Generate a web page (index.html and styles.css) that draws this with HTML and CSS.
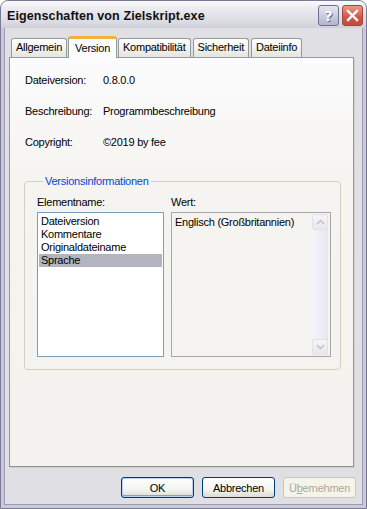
FILE: index.html
```html
<!DOCTYPE html>
<html>
<head>
    <link rel="stylesheet" href="styles.css">
    <title>Eigenschaften von Zielskript.exe</title>
</head>
<body>
<div class="window">
    <div class="titlebar">
        <span class="title">Eigenschaften von Zielskript.exe</span>
        <div class="caption_buttons">
            <div class="cap_btn help_btn">?</div>
            <div class="cap_btn close_btn">
                <svg width="13" height="13" viewBox="0 0 13 13">
                    <path d="M2 2 L11 11 M11 2 L2 11" stroke="#ffffff" stroke-width="2.4" stroke-linecap="square"/>
                </svg>
            </div>
        </div>
    </div>

    <div class="client">
        <div class="tabs">
            <div class="tab">Allgemein</div>
            <div class="tab selected">Version</div>
            <div class="tab">Kompatibilität</div>
            <div class="tab">Sicherheit</div>
            <div class="tab">Dateiinfo</div>
        </div>

        <div class="panel">
            <div class="row">
                <span class="label">Dateiversion:</span>
                <span class="value">0.8.0.0</span>
            </div>
            <div class="row">
                <span class="label">Beschreibung:</span>
                <span class="value">Programmbeschreibung</span>
            </div>
            <div class="row">
                <span class="label">Copyright:</span>
                <span class="value">©2019 by fee</span>
            </div>

            <fieldset class="groupbox">
                <legend>Versionsinformationen</legend>
                <div class="columns">
                    <div class="col">
                        <div class="col_label">Elementname:</div>
                        <div class="listbox">
                            <div class="item">Dateiversion</div>
                            <div class="item">Kommentare</div>
                            <div class="item">Originaldateiname</div>
                            <div class="item active">Sprache</div>
                        </div>
                    </div>
                    <div class="col">
                        <div class="col_label">Wert:</div>
                        <div class="valuebox">
                            <div class="valuetext">Englisch (Großbritannien)</div>
                            <div class="scrollbar">
                                <div class="sb_btn">
                                    <svg width="9" height="6" viewBox="0 0 9 6"><path d="M1 5 L4.5 1.5 L8 5" fill="none" stroke="#c3c3cc" stroke-width="1.6"/></svg>
                                </div>
                                <div class="sb_track"></div>
                                <div class="sb_btn">
                                    <svg width="9" height="6" viewBox="0 0 9 6"><path d="M1 1 L4.5 4.5 L8 1" fill="none" stroke="#c3c3cc" stroke-width="1.6"/></svg>
                                </div>
                            </div>
                        </div>
                    </div>
                </div>
            </fieldset>
        </div>

        <div class="buttons">
            <button class="default">OK</button>
            <button>Abbrechen</button>
            <button disabled>Ü<u>b</u>ernehmen</button>
        </div>
    </div>
</div>
</body>
</html>
```

FILE: styles.css
```css
body
{
    margin:0;
    font-family:"Liberation Sans", Arial, sans-serif;
    font-size:11px;
    letter-spacing:-0.25px;
    color:black;
    background-color:white;
}
.window
{
    box-sizing:border-box;
    width:367px;
    height:509px;
    border:1px solid #7b7b98;
    border-radius:8px 8px 0 0;
    background:#c9c9d8;
    padding:0 3px 3px 3px;
    display:flex;
    flex-direction:column;
}
.titlebar
{
    height:27px;
    display:flex;
    align-items:center;
    padding-left:6px;
    margin:0 -3px;
    border-radius:7px 7px 0 0;
    background:linear-gradient(#fbfbfc, #e6e6ec 40%, #dadae2 80%, #cfcfda);
}
.title
{
    font-weight:bold;
    font-size:12.5px;
    letter-spacing:0.1px;
    color:#111111;
    padding-top:2px;
}
.caption_buttons
{
    margin-left:auto;
    display:flex;
    gap:3px;
    padding-right:3px;
    padding-top:2px;
}
.cap_btn
{
    box-sizing:border-box;
    width:21px;
    height:21px;
    border-radius:3px;
    display:flex;
    align-items:center;
    justify-content:center;
}
.help_btn
{
    border:1px solid #6e6e92;
    background:linear-gradient(#e6e6f0, #b4b4cc);
    color:white;
    font-family:"DejaVu Sans", sans-serif;
    font-weight:bold;
    font-size:14px;
    text-shadow:1px 1px 0 #6a6a88;
}
.close_btn
{
    border:1px solid #a3463c;
    background:linear-gradient(#ec9a88, #d0564a 60%, #c24a3f);
}
.client
{
    flex:1;
    background:#e0dfe3;
    border:1px solid #9a9ab2;
    border-top:none;
    padding:8px 8px 0 4px;
    display:flex;
    flex-direction:column;
}
.tabs
{
    display:flex;
    align-items:flex-end;
    padding-left:2px;
    gap:2px;
    position:relative;
    z-index:1;
}
.tab
{
    box-sizing:border-box;
    height:19px;
    padding:0 4px;
    line-height:17px;
    border:1px solid #919b9c;
    border-bottom:none;
    border-radius:3px 3px 0 0;
    background:linear-gradient(#ffffff, #f3f3ef 50%, #e5e4dd);
}
.tab.selected
{
    height:22px;
    margin:0 -1px -1px -1px;
    padding:0 6px;
    line-height:18px;
    border-top:3px solid #f2b33d;
    background:#fcfcfe;
}
.panel
{
    box-sizing:border-box;
    height:410px;
    border:1px solid #919b9c;
    border-bottom-color:#8a9293;
    box-shadow:1px 1px 0 #d0cfc8;
    background:linear-gradient(#fcfcfe, #f5f4f0 30%, #f3f2ee);
    padding:16px 12px 0 14px;
}
.row
{
    display:flex;
    line-height:13px;
    margin-bottom:18px;
    padding-left:1px;
}
.label
{
    width:78px;
}
.groupbox
{
    margin:26px 0 0 0;
    padding:0 10px 12px 12px;
    border:1px solid #d0d0bf;
    border-radius:4px;
    min-width:0;
}
.groupbox legend
{
    color:#0046d5;
    padding:0 2px;
    margin-left:6px;
    line-height:13px;
}
.columns
{
    display:flex;
    gap:7px;
    padding-top:8px;
}
.col_label
{
    line-height:13px;
    margin-bottom:3px;
}
.listbox
{
    box-sizing:border-box;
    width:127px;
    height:145px;
    border:1px solid #7f9db9;
    background:white;
    padding:2px 1px 1px 1px;
}
.item
{
    line-height:13px;
    padding:0 2px;
}
.item.active
{
    background:#b2b4bf;
}
.valuebox
{
    box-sizing:border-box;
    width:160px;
    height:145px;
    border:1px solid #a7a6aa;
    display:flex;
    padding:1px;
}
.valuetext
{
    flex:1;
    padding:2px 2px;
    line-height:13px;
}
.scrollbar
{
    width:16px;
    margin-right:1px;
    display:flex;
    flex-direction:column;
    background:linear-gradient(90deg, #f4f4fa, #eeeef8 50%, #e6e6f2);
}
.sb_btn
{
    box-sizing:border-box;
    height:16px;
    border:1px solid #e1e1e6;
    border-radius:2px;
    background:linear-gradient(#f6f6f8, #e8e8ec);
    display:flex;
    align-items:center;
    justify-content:center;
}
.sb_track
{
    flex:1;
}
.buttons
{
    display:flex;
    justify-content:flex-end;
    gap:8px;
    margin-top:10px;
    margin-right:-2px;
}
button
{
    box-sizing:border-box;
    width:73px;
    height:21px;
    border:1px solid #003c74;
    border-radius:3px;
    background:linear-gradient(#ffffff, #f4f4f0 60%, #dcdcd4);
    font-family:"Liberation Sans", Arial, sans-serif;
    font-size:11px;
    letter-spacing:-0.25px;
    color:black;
    padding:0;
}
button.default
{
    box-shadow:inset 0 0 0 1px #b8d0f2, inset 0 -1px 0 1px #7a9ee0;
}
button:disabled
{
    border-color:#c9c7ba;
    color:#aca899;
    background:#f5f4ea;
}
```
